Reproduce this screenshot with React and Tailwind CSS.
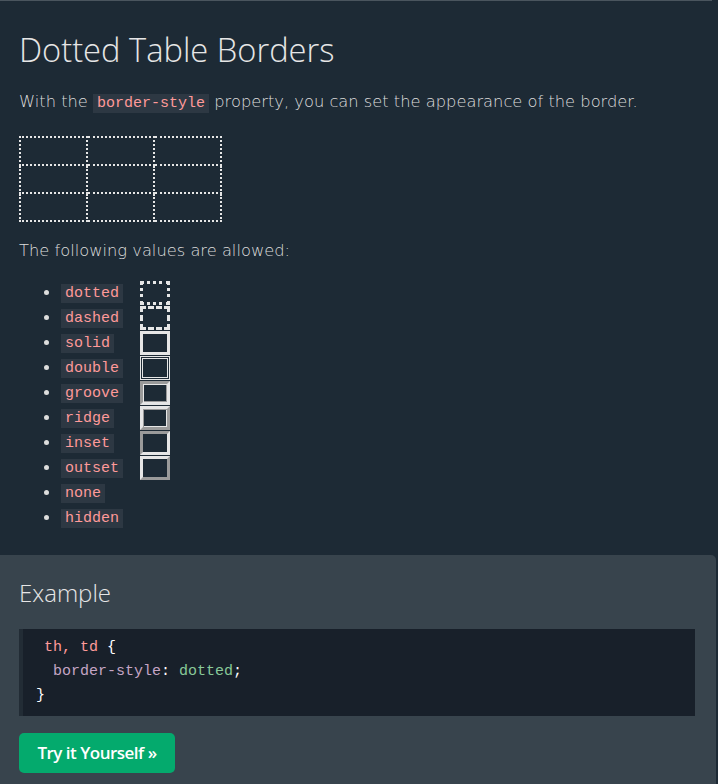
import React from "react";

const values = [
  { name: "dotted", box: "dotted" },
  { name: "dashed", box: "dashed" },
  { name: "solid", box: "solid" },
  { name: "double", box: "double" },
  { name: "groove", box: "groove" },
  { name: "ridge", box: "ridge" },
  { name: "inset", box: "inset" },
  { name: "outset", box: "outset" },
  { name: "none", box: null },
  { name: "hidden", box: null },
];

const boxStyles = {
  dotted: "border-dotted border-[#e6e6e6]",
  dashed: "border-dashed border-[#e6e6e6]",
  solid: "border-solid border-[#e6e6e6]",
  double: "border-double border-[#e6e6e6]",
  groove:
    "border-t-[#9a9a9a] border-l-[#9a9a9a] border-r-[#e6e6e6] border-b-[#e6e6e6] shadow-[inset_1px_1px_0_#e6e6e6,inset_-1px_-1px_0_#9a9a9a]",
  ridge:
    "border-t-[#e6e6e6] border-l-[#e6e6e6] border-r-[#9a9a9a] border-b-[#9a9a9a] shadow-[inset_1px_1px_0_#9a9a9a,inset_-1px_-1px_0_#e6e6e6]",
  inset: "border-t-[#9a9a9a] border-l-[#9a9a9a] border-r-[#e6e6e6] border-b-[#e6e6e6]",
  outset: "border-t-[#e6e6e6] border-l-[#e6e6e6] border-r-[#9a9a9a] border-b-[#9a9a9a]",
};

function Code({ children }) {
  return (
    <code className="bg-[#2d3843] px-[4px] py-[1px] font-['Liberation_Mono',monospace] text-[15px] text-[#ff9a9a]">
      {children}
    </code>
  );
}

export default function App() {
  return (
    <div className="min-h-[784px] bg-[#1d2a35] font-['DejaVu_Sans',sans-serif] text-[#dddddd]">
      <div className="h-px w-[712px] bg-[#4a555e]" />
      <div className="px-[19px] pb-[25px]">
        <h1 className="pt-[27px] font-['Open_Sans',sans-serif] text-[32.7px] font-light leading-[44px] text-[#e6e6e6]">
          Dotted Table Borders
        </h1>
        <p className="mt-[18px] text-[16.3px] font-extralight leading-[24px]">
          With the <Code>border-style</Code> property, you can set the appearance of the border.
        </p>

        <table className="mt-[20px] border-collapse">
          <tbody>
            {[0, 1, 2].map((r) => (
              <tr key={r}>
                {[0, 1, 2].map((c) => (
                  <td key={c} className="h-[28px] w-[67px] border-2 border-dotted border-[#e6e6e6]" />
                ))}
              </tr>
            ))}
          </tbody>
        </table>

        <p className="mt-[17px] text-[16.3px] font-extralight leading-[24px]">
          The following values are allowed:
        </p>

        <ul className="mt-[17px] flex flex-col pl-[25px]">
          {values.map((v) => (
            <li key={v.name} className="grid h-[25px] grid-cols-[17px_79px_30px] items-center">
              <span className="h-[5px] w-[5px] rounded-full bg-[#dddddd]" />
              <span className="leading-[19px]">
                <Code>{v.name}</Code>
              </span>
              {v.box ? (
                <span className={`h-[24px] w-[30px] border-[3px] ${boxStyles[v.box]}`} />
              ) : (
                <span />
              )}
            </li>
          ))}
        </ul>
      </div>

      <div className="mr-[2px] rounded-tr-[5px] bg-[#38444d] pb-[12px] pl-[19px] pr-[21px] pt-[20px]">
        <h2 className="font-['Open_Sans',sans-serif] text-[24px] font-light leading-[36px] text-[#e6e6e6]">
          Example
        </h2>
        <div className="mt-[18px] border-l-4 border-[#222c35] bg-[#18202a] pb-[8px] pl-[13px] pt-[7px] font-['Liberation_Mono',monospace] text-[15px] leading-[24px]">
          <div className="pl-[8px]">
            <span className="text-[#ff9a9a]">th, td</span>{" "}
            <span className="text-white">{"{"}</span>
          </div>
          <div className="pl-[17px]">
            <span className="text-[#c5a5c5]">border-style</span>
            <span className="text-white">:</span>{" "}
            <span className="text-[#88c999]">dotted</span>
            <span className="text-white">;</span>
          </div>
          <div className="text-white">{"}"}</div>
        </div>
        <button className="mt-[17px] h-[40px] w-[156px] rounded-[5px] bg-[#04aa6d] font-['Open_Sans',sans-serif] text-[17px] font-semibold tracking-[-0.5px] text-white">
          Try it Yourself »
        </button>
      </div>
    </div>
  );
}
